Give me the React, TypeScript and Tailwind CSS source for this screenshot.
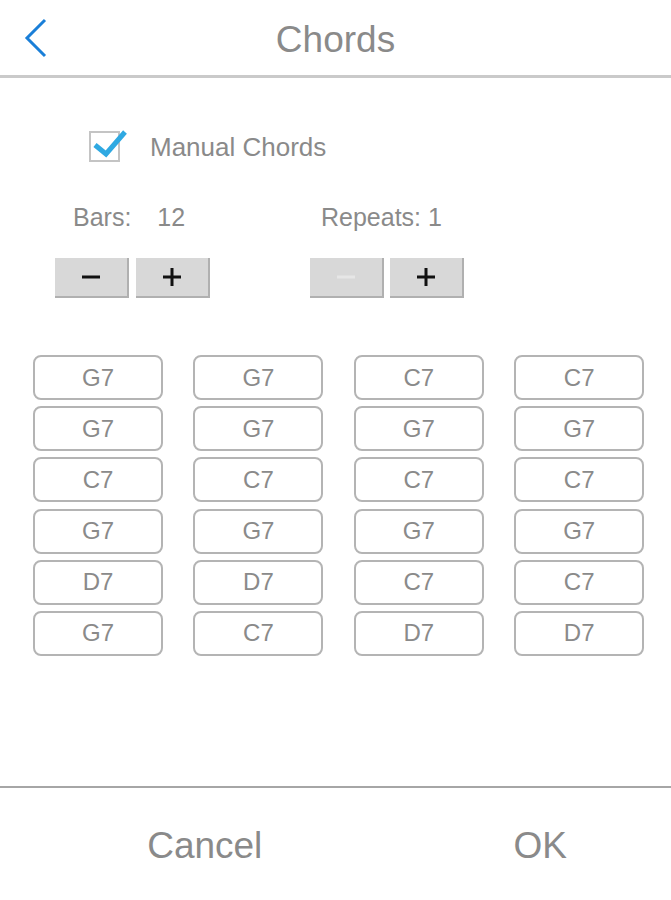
import React from 'react';

const chords = [
  ['G7', 'G7', 'C7', 'C7'],
  ['G7', 'G7', 'G7', 'G7'],
  ['C7', 'C7', 'C7', 'C7'],
  ['G7', 'G7', 'G7', 'G7'],
  ['D7', 'D7', 'C7', 'C7'],
  ['G7', 'C7', 'D7', 'D7'],
];

function StepButton({ kind, disabled }: { kind: 'minus' | 'plus'; disabled?: boolean }) {
  const color = disabled ? '#e6e6e6' : '#111';
  return (
    <button
      className="w-[74px] h-[40px] flex items-center justify-center bg-[#d8d8d8] border-r-2 border-b-2 border-[#b0b0b0]"
      disabled={disabled}
    >
      <svg width="20" height="20" viewBox="0 0 20 20">
        <rect x="1" y="8.5" width="18" height="3" fill={color} />
        {kind === 'plus' && <rect x="8.5" y="1" width="3" height="18" fill={color} />}
      </svg>
    </button>
  );
}

export default function App() {
  return (
    <div
      className="h-[900px] w-full flex flex-col bg-white text-[#8a8a8a]"
      style={{ fontFamily: '"Liberation Sans", Arial, sans-serif' }}
    >
      {/* Header */}
      <header className="h-[78px] shrink-0 grid grid-cols-[1fr_auto_1fr] items-center border-b-[3px] border-[#cacaca]">
        <div className="pl-[24px] flex items-center">
          <svg width="24" height="40" viewBox="0 0 24 40">
            <polyline points="21,2 3,20 21,38" fill="none" stroke="#1a7fd8" strokeWidth="3" />
          </svg>
        </div>
        <h1 className="text-[37px] leading-none pt-[4px]">Chords</h1>
        <div />
      </header>

      {/* Main */}
      <main className="flex-1 flex flex-col">
        <div className="mt-[53px] ml-[89px] flex items-center">
          <div className="relative w-[31px] h-[31px] border-2 border-[#c4c4c4] bg-white">
            <svg className="absolute left-[1px] top-[-4px]" width="36" height="30" viewBox="0 0 36 30">
              <polyline points="3,16 14,25 33,3" fill="none" stroke="#2fa9e2" strokeWidth="5" />
            </svg>
          </div>
          <span className="ml-[30px] text-[26px] leading-none">Manual Chords</span>
        </div>

        <div className="mt-[43px] flex">
          <div className="ml-[55px] flex flex-col">
            <div className="ml-[18px] text-[25px] leading-none flex">
              <span>Bars:</span>
              <span className="ml-[26px]">12</span>
            </div>
            <div className="mt-[28px] flex gap-[7px]">
              <StepButton kind="minus" />
              <StepButton kind="plus" />
            </div>
          </div>
          <div className="ml-[100px] flex flex-col">
            <div className="ml-[11px] text-[25px] leading-none">Repeats: 1</div>
            <div className="mt-[28px] flex gap-[6px]">
              <StepButton kind="minus" disabled />
              <StepButton kind="plus" />
            </div>
          </div>
        </div>

        <div className="mt-[57px] ml-[33px] grid grid-cols-[repeat(4,130px)] gap-x-[30.4px] gap-y-[6.2px]">
          {chords.flat().map((c, i) => (
            <div
              key={i}
              className="h-[45px] flex items-center justify-center rounded-[8px] border-2 border-[#b4b4b4] text-[24px]"
            >
              {c}
            </div>
          ))}
        </div>
      </main>

      {/* Footer */}
      <footer className="h-[114px] shrink-0 border-t-2 border-[#a6a6a6] grid grid-cols-2 items-center">
        <button className="text-[37px] pl-[74px] pt-[4px]">Cancel</button>
        <button className="text-[37px] pl-[74px] pt-[4px]">OK</button>
      </footer>
    </div>
  );
}
